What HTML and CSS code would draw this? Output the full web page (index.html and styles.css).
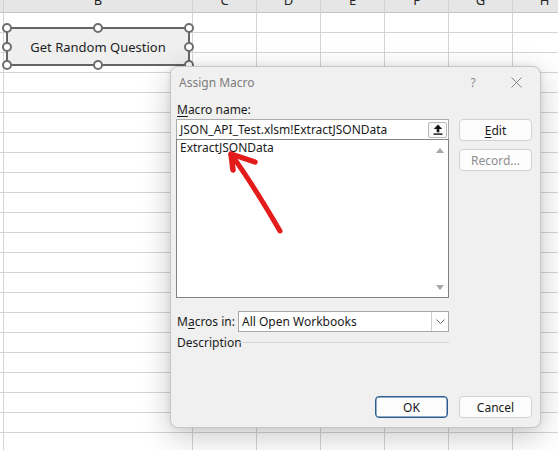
FILE: index.html
```html
<!DOCTYPE html>
<html>
<head>
<meta charset="utf-8">
<link rel="stylesheet" href="styles.css">
</head>
<body>
<div class="sheet">
  <div class="col col-a"><div class="hd"></div><div class="cells"></div></div>
  <div class="col col-b"><div class="hd"><span>B</span></div><div class="cells"></div></div>
  <div class="col col-n"><div class="hd"><span>C</span></div><div class="cells"></div></div>
  <div class="col col-n"><div class="hd"><span>D</span></div><div class="cells"></div></div>
  <div class="col col-n"><div class="hd"><span>E</span></div><div class="cells"></div></div>
  <div class="col col-n"><div class="hd"><span>F</span></div><div class="cells"></div></div>
  <div class="col col-n"><div class="hd"><span>G</span></div><div class="cells"></div></div>
  <div class="col col-n"><div class="hd"><span>H</span></div><div class="cells"></div></div>
</div>

<div class="shape">
  <span class="shape-text">Get Random Question</span>
  <i class="h h-tl"></i><i class="h h-tc"></i><i class="h h-tr"></i>
  <i class="h h-ml"></i><i class="h h-mr"></i>
  <i class="h h-bl"></i><i class="h h-bc"></i><i class="h h-br"></i>
</div>

<div class="dialog">
  <div class="titlebar">
    <span class="title">Assign Macro</span>
    <span class="help">?</span>
    <span class="close"><svg width="11" height="11" viewBox="0 0 11 11"><path d="M0.5 0.5 L10.5 10.5 M10.5 0.5 L0.5 10.5" stroke="#777" stroke-width="0.9" fill="none"/></svg></span>
  </div>
  <div class="main">
    <div class="left">
      <div class="label"><u>M</u>acro name:</div>
      <div class="namebox">
        <span class="nametext">JSON_API_Test.xlsm!ExtractJSONData</span>
        <span class="upbtn"><svg width="10" height="11" viewBox="0 0 10 11"><path d="M5 0.5 L9.2 5 H6.3 V8.2 H3.7 V5 H0.8 Z" fill="#111"/><rect x="0.5" y="9.4" width="9" height="1.4" fill="#111"/></svg></span>
      </div>
      <div class="list">
        <div class="list-items"><div class="item">ExtractJSONData</div></div>
        <div class="scroll"><i class="tri-up"></i><i class="tri-down"></i></div>
      </div>
    </div>
    <div class="right">
      <div class="btn"><u>E</u>dit</div>
      <div class="btn btn-disabled">Record...</div>
    </div>
  </div>
  <div class="row-in">
    <div class="lbl">M<u>a</u>cros in:</div>
    <div class="select">
      <span class="seltext">All Open Workbooks</span>
      <span class="drop"><svg width="9" height="5" viewBox="0 0 9 5"><path d="M0.5 0.5 L4.5 4.5 L8.5 0.5" stroke="#666" stroke-width="1" fill="none"/></svg></span>
    </div>
  </div>
  <div class="row-desc">
    <div class="lbl">Description</div>
    <div class="rule"></div>
  </div>
  <div class="footer">
    <div class="btn btn-ok">OK</div>
    <div class="btn">Cancel</div>
  </div>
</div>

<svg class="annot" width="558" height="450" viewBox="0 0 558 450">
  <path d="M280 231 Q254 186 231 154" stroke="#e41b1b" stroke-width="5" fill="none" stroke-linecap="round"/>
  <path d="M255 162 L231 154 L233 170" stroke="#e41b1b" stroke-width="5.5" fill="none" stroke-linecap="round" stroke-linejoin="round"/>
</svg>
</body>
</html>
```
FILE: styles.css
```css
* { box-sizing: border-box; }
html, body { margin: 0; padding: 0; }
body {
  width: 558px;
  height: 450px;
  overflow: hidden;
  position: relative;
  background: #fff;
  font-family: "Noto Sans", "Segoe UI", sans-serif;
  font-size: 12px;
  color: #1a1a1a;
}
u { text-decoration: underline; text-underline-offset: 2px; }

/* spreadsheet */
.sheet { display: flex; height: 450px; }
.col { display: flex; flex-direction: column; flex: none; }
.col + .col { border-left: 1px solid #d4d4d4; }
.col-a { width: 3px; }
.col-b { width: 189px; }
.col-n { width: 64px; }
.hd {
  height: 13px;
  background: #e6e6e6;
  border-bottom: 1px solid #c2c2c2;
  overflow: hidden;
  text-align: center;
  font-size: 13px;
  color: #262626;
}
.hd span { display: block; line-height: 1; margin-top: -6px; }
.cells {
  flex: 1;
  background: repeating-linear-gradient(to bottom, transparent 0 19px, #d4d4d4 19px 20px);
}

/* shape button */
.shape {
  position: absolute;
  left: 6px;
  top: 27px;
  width: 184px;
  height: 39px;
  border: 2px solid #646464;
  background: #efefef;
  display: flex;
  align-items: center;
  justify-content: center;
  font-size: 13px;
  color: #1e1e1e;
}
.h {
  position: absolute;
  width: 10px;
  height: 10px;
  border-radius: 50%;
  background: #fff;
  border: 2px solid #6e6e6e;
  transform: translate(-50%, -50%);
}
.h-tl { left: -1px; top: -1px; }
.h-tc { left: 50%; top: -1px; }
.h-tr { left: calc(100% + 1px); top: -1px; }
.h-ml { left: -1px; top: 50%; }
.h-mr { left: calc(100% + 1px); top: 50%; }
.h-bl { left: -1px; top: calc(100% + 1px); }
.h-bc { left: 50%; top: calc(100% + 1px); }
.h-br { left: calc(100% + 1px); top: calc(100% + 1px); }

/* dialog */
.dialog {
  position: absolute;
  left: 170px;
  top: 66px;
  width: 371px;
  height: 362px;
  background: #f0f0f0;
  border: 1px solid #c6c6c6;
  border-radius: 8px;
  box-shadow: 0 8px 30px rgba(0,0,0,0.22), 0 0 6px rgba(0,0,0,0.08);
  padding: 0 8px 0 5px;
  display: flex;
  flex-direction: column;
}
.titlebar {
  height: 31px;
  display: flex;
  align-items: center;
  padding-left: 3px;
}
.title { color: #7c7c7c; flex: 1; }
.help { color: #8a8a8a; width: 12px; text-align: center; margin-right: 32px; }
.close { width: 11px; height: 11px; display: flex; margin-right: 10px; }

.main { display: flex; gap: 10px; }
.left { width: 273px; display: flex; flex-direction: column; }
.label { height: 21px; padding-top: 3px; line-height: 17px; padding-left: 1px; }
.namebox {
  height: 20px;
  background: #fff;
  border: 1px solid #ababab;
  border-bottom: none;
  display: flex;
  align-items: center;
  justify-content: space-between;
  padding: 0 1px 0 3px;
  white-space: nowrap;
  overflow: hidden;
}
.upbtn {
  width: 19px;
  height: 16px;
  border: 1px solid #b8b8b8;
  border-radius: 2px;
  background: #fafafa;
  display: flex;
  align-items: center;
  justify-content: center;
  flex: none;
}
.list {
  height: 159px;
  background: #fff;
  border: 1px solid #828282;
  display: flex;
}
.list-items { flex: 1; padding-left: 3px; }
.item { line-height: 16px; }
.scroll {
  width: 17px;
  display: flex;
  flex-direction: column;
  justify-content: space-between;
  align-items: center;
  padding: 8px 0 7px;
}
.tri-up { width: 0; height: 0; border-left: 4px solid transparent; border-right: 4px solid transparent; border-bottom: 5px solid #a6a6a6; }
.tri-down { width: 0; height: 0; border-left: 4px solid transparent; border-right: 4px solid transparent; border-top: 5px solid #a6a6a6; }

.right { width: 73px; padding-top: 21px; display: flex; flex-direction: column; gap: 8px; }
.btn {
  height: 22px;
  width: 73px;
  background: #fdfdfd;
  border: 1px solid #d2d2d2;
  border-radius: 4px;
  display: flex;
  align-items: center;
  justify-content: center;
  color: #1a1a1a;
}
.btn-disabled { color: #8d8d8d; }
.btn-ok { border-color: #2a5d8f; box-shadow: inset 0 0 0 0.5px #2a5d8f; }

.row-in { display: flex; align-items: center; margin-top: 13px; height: 21px; }
.lbl { width: 62px; padding-left: 1px; }
.select {
  width: 211px;
  height: 21px;
  background: #fff;
  border: 1px solid #a8a8a8;
  display: flex;
  align-items: center;
  justify-content: space-between;
  padding-left: 3px;
}
.drop {
  width: 17px;
  height: 19px;
  border-left: 1px solid #cfcfcf;
  display: flex;
  align-items: center;
  justify-content: center;
}
.row-desc { display: flex; align-items: center; height: 16px; margin-top: 2px; }
.rule { width: 211px; height: 1px; background: #d6d6d6; }

.footer {
  margin-top: auto;
  padding-bottom: 9px;
  display: flex;
  justify-content: flex-end;
  gap: 11px;
}

.annot { position: absolute; left: 0; top: 0; pointer-events: none; }
```
